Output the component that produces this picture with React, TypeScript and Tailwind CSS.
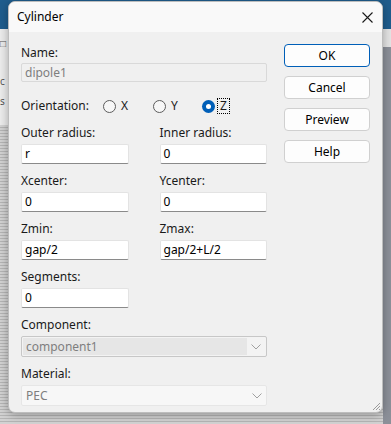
import React from "react";

const font = { fontFamily: '"Noto Sans", "Open Sans", sans-serif' };

const TextField = ({ value, className = "" }: { value: string; className?: string }) => (
  <div
    className={`h-[20px] bg-white border border-[#e3e3e3] border-b-[#8a8a8a] rounded-[2px] px-[3px] flex items-center text-[12px] text-black ${className}`}
  >
    {value}
  </div>
);

const Field = ({ label, value }: { label: string; value: string }) => (
  <div className="w-[108px]">
    <div className="h-[16px] leading-[16px]">{label}</div>
    <TextField value={value} className="mt-[3px]" />
  </div>
);

const Radio = ({ label, checked }: { label: string; checked?: boolean }) => (
  <div className="flex items-center">
    {checked ? (
      <span className="w-[13px] h-[13px] rounded-full bg-[#005fb8] flex items-center justify-center">
        <span className="w-[5px] h-[5px] rounded-full bg-white" />
      </span>
    ) : (
      <span className="w-[13px] h-[13px] rounded-full border border-[#5c5c5c] bg-[#f7f7f7]" />
    )}
    <span
      className={`ml-[3px] px-[2px] leading-[14px] ${
        checked ? "outline outline-1 outline-dotted outline-black" : ""
      }`}
    >
      {label}
    </span>
  </div>
);

const Chevron = () => (
  <svg width="10" height="6" viewBox="0 0 10 6" fill="none">
    <path d="M0.5 0.5 L5 5 L9.5 0.5" stroke="#a0a0a0" strokeWidth="1" />
  </svg>
);

const Btn = ({ label, primary }: { label: string; primary?: boolean }) => (
  <div
    className={`h-[23px] w-[86px] rounded-[4px] bg-[#fdfdfd] flex items-center justify-center text-[12px] text-black ${
      primary ? "border-[1.5px] border-[#005fb8]" : "border border-[#d0d0d0]"
    }`}
  >
    {label}
  </div>
);

export default function App() {
  return (
    <div className="relative w-[391px] h-[424px] overflow-hidden bg-[#c9c9c9]" style={font}>
      {/* app behind the dialog */}
      <div className="h-[29px] bg-[#1f5d8d]" />
      <div className="flex h-[96px]">
        <div className="w-[8px] bg-[#ececec] text-[10px] text-[#555] leading-[12px] pt-[8px]">
          <div>□</div>
          <div className="mt-[26px]">c</div>
          <div className="mt-[8px]">s</div>
        </div>
        <div className="flex-1" />
        <div className="w-[8px] flex flex-col">
          <div className="h-[18px] bg-[#e4e4e4]" />
          <div className="flex-1 bg-[#8c9099]" />
        </div>
      </div>
      <div className="h-[300px] bg-[repeating-linear-gradient(0deg,#b5b5b5_0px,#b5b5b5_1px,#d2d2d2_1px,#d2d2d2_3px),repeating-linear-gradient(90deg,#b5b5b5_0px,#b5b5b5_1px,transparent_1px,transparent_3px)]">
        <div className="ml-auto w-[8px] h-[300px] bg-[#8c9099]" />
      </div>

      {/* dialog */}
      <div className="absolute left-[8px] top-[1px] w-[375px] h-[412px] bg-[#f0f0f0] rounded-[7px] border border-[#bdbdbd] shadow-[0_2px_10px_rgba(0,0,0,0.3)] flex flex-col text-[12px] text-[#1a1a1a] overflow-hidden">
        <div className="h-[30px] bg-[#f9f9f9] flex items-center justify-between pl-[8px] pr-[9px]">
          <span className="text-[12px] text-black">Cylinder</span>
          <svg width="11" height="11" viewBox="0 0 11 11">
            <path d="M0.5 0.5 L10.5 10.5 M10.5 0.5 L0.5 10.5" stroke="#1a1a1a" strokeWidth="1.1" />
          </svg>
        </div>

        <div className="flex pl-[12px]">
          <div className="w-[246px] flex flex-col">
            <div className="mt-[13px] h-[16px] leading-[16px]">Name:</div>
            <div className="mt-[2px] h-[19px] border border-[#d9d9d9] rounded-[2px] px-[3px] flex items-center text-[#7e7e7e]">
              dipole1
            </div>

            <div className="mt-[16px] h-[16px] flex items-center">
              <span className="w-[82px]">Orientation:</span>
              <div className="w-[50px]">
                <Radio label="X" />
              </div>
              <div className="w-[49px]">
                <Radio label="Y" />
              </div>
              <Radio label="Z" checked />
            </div>

            <div className="mt-[11px] flex flex-col gap-[9px]">
              <div className="flex gap-[31px]">
                <Field label="Outer radius:" value="r" />
                <Field label="Inner radius:" value="0" />
              </div>
              <div className="flex gap-[31px]">
                <Field label="Xcenter:" value="0" />
                <Field label="Ycenter:" value="0" />
              </div>
              <div className="flex gap-[31px]">
                <Field label="Zmin:" value="gap/2" />
                <Field label="Zmax:" value="gap/2+L/2" />
              </div>
              <Field label="Segments:" value="0" />
              <div>
                <div className="h-[16px] leading-[16px]">Component:</div>
                <div className="mt-[3px] h-[21px] border border-[#c7c7c7] rounded-[2px] bg-[#f3f3f3] flex items-center p-[1px]">
                  <div className="flex-1 h-full bg-[#e6e6e6] px-[3px] flex items-center text-[#7e7e7e]">
                    component1
                  </div>
                  <div className="w-[18px] flex justify-center">
                    <Chevron />
                  </div>
                </div>
              </div>
              <div>
                <div className="h-[16px] leading-[16px]">Material:</div>
                <div className="mt-[3px] h-[21px] border border-[#e6e6e6] rounded-[2px] bg-[#f7f7f7] flex items-center pl-[4px]">
                  <div className="flex-1 text-[#7e7e7e]">PEC</div>
                  <div className="w-[19px] flex justify-center">
                    <Chevron />
                  </div>
                </div>
              </div>
            </div>
          </div>

          <div className="ml-[17px] mt-[12px] flex flex-col gap-[9px]">
            <Btn label="OK" primary />
            <Btn label="Cancel" />
            <Btn label="Preview" />
            <Btn label="Help" />
          </div>
        </div>

        {/* resize grip */}
        <svg className="absolute right-[1px] bottom-[1px]" width="10" height="10" viewBox="0 0 10 10">
          <path d="M9 2 L2 9 M9 5 L5 9 M9 8 L8 9" stroke="#9a9a9a" strokeWidth="1" />
        </svg>
      </div>
    </div>
  );
}
